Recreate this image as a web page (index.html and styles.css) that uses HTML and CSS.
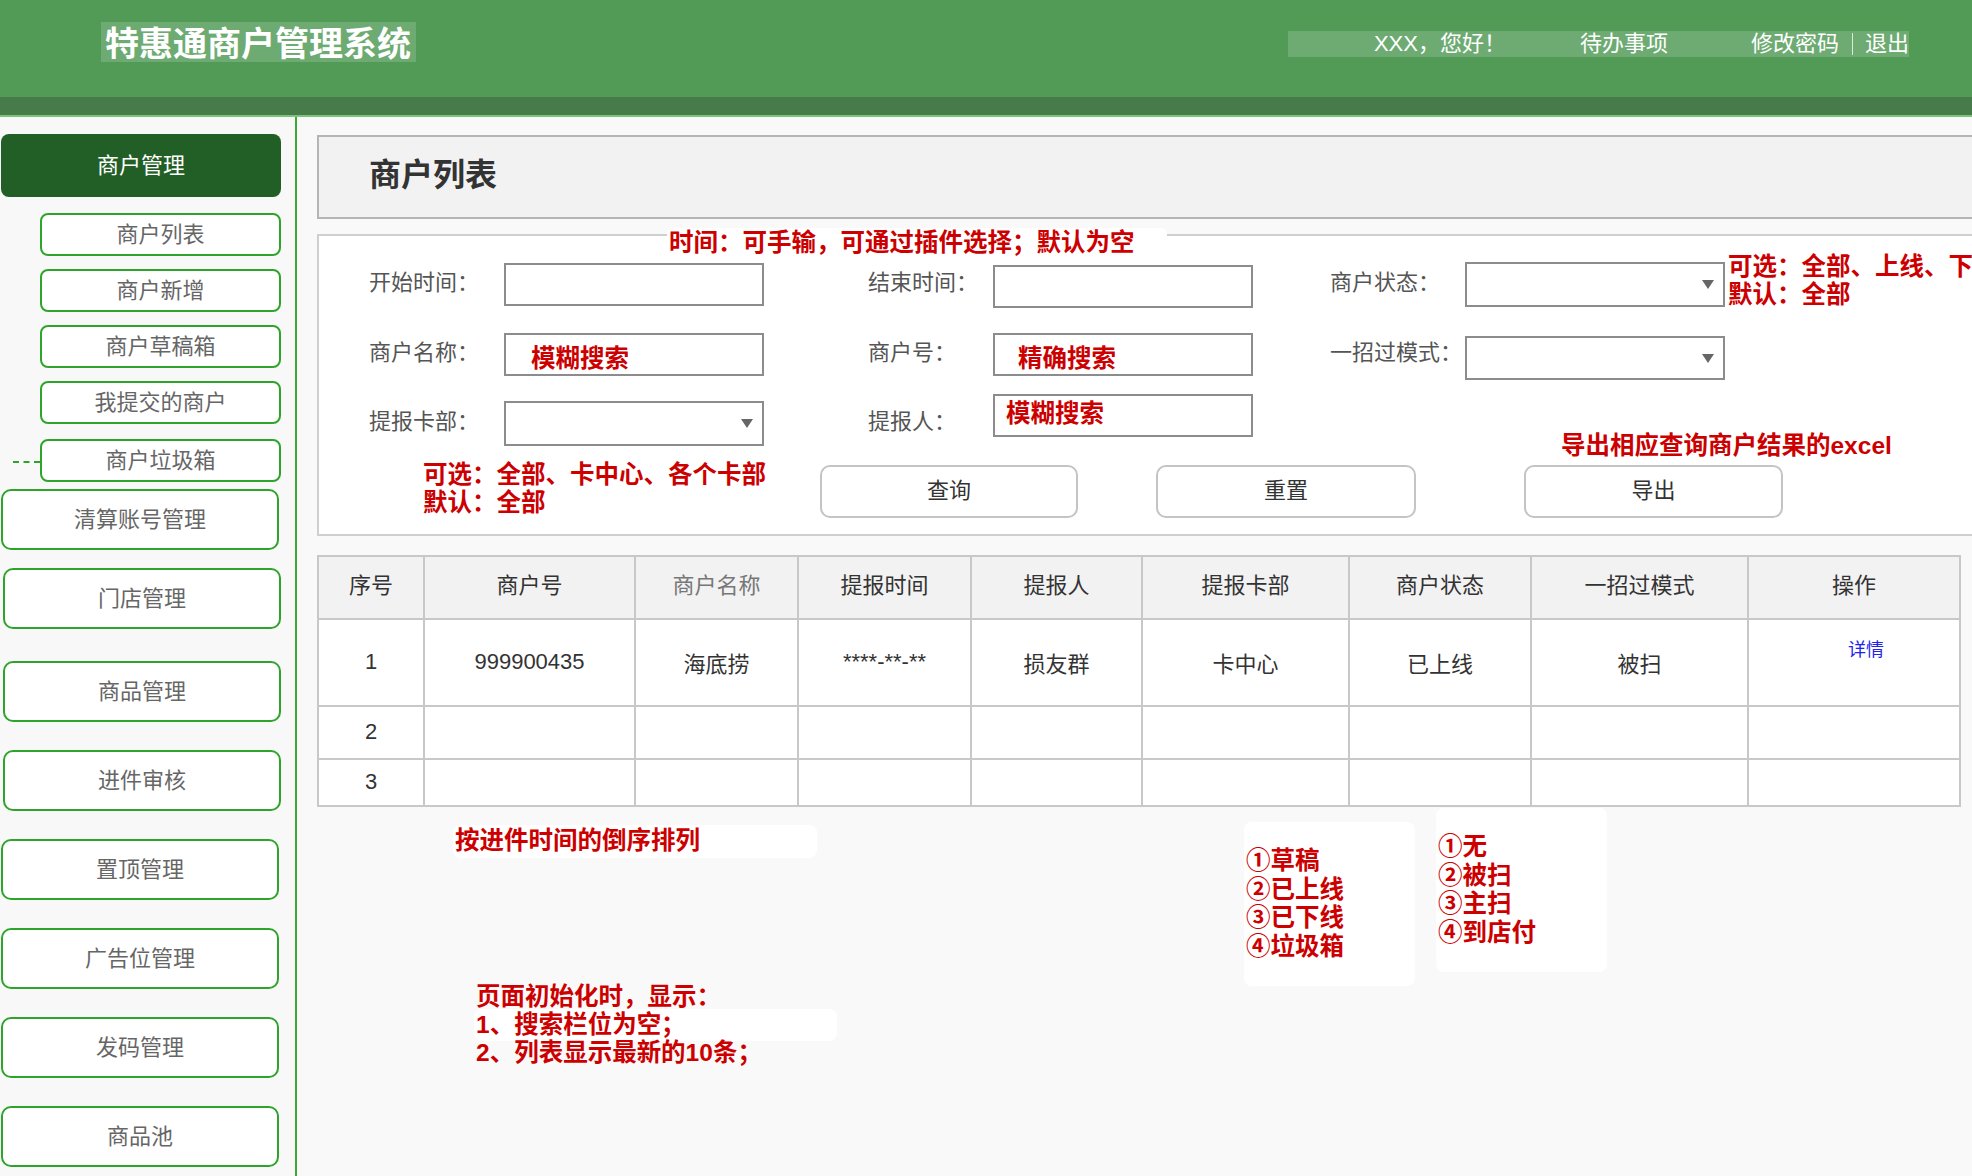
FILE: index.html
```html
<!DOCTYPE html>
<html lang="zh-CN">
<head>
<meta charset="utf-8">
<title>特惠通商户管理系统</title>
<link rel="stylesheet" href="styles.css">
</head>
<body>
<header class="topbar">
  <div class="brand">特惠通商户管理系统</div>
  <div class="userbar">
    <span class="greet">XXX，您好！</span>
    <span class="todo">待办事项</span>
    <span class="pwd">修改密码</span>
    <span class="sep"></span>
    <span class="logout">退出</span>
  </div>
</header>
<div class="band"></div>
<div class="band-line"></div>
<div class="layout">
  <nav class="sidebar">
    <div class="nav-head">商户管理</div>
    <div class="nav-sub first">商户列表</div>
    <div class="nav-sub">商户新增</div>
    <div class="nav-sub">商户草稿箱</div>
    <div class="nav-sub">我提交的商户</div>
    <div class="nav-sub trash">商户垃圾箱</div>
    <div class="nav-main m-first">清算账号管理</div>
    <div class="nav-main m-second shift">门店管理</div>
    <div class="nav-main m-third shift">商品管理</div>
    <div class="nav-main shift">进件审核</div>
    <div class="nav-main">置顶管理</div>
    <div class="nav-main">广告位管理</div>
    <div class="nav-main">发码管理</div>
    <div class="nav-main">商品池</div>
  </nav>
  <main class="main">
    <div class="page-title">商户列表</div>
    <section class="filter">
      <div class="ann ann-time">时间：可手输，可通过插件选择；默认为空</div>
      <div class="ann ann-status">可选：全部、上线、下<br>默认：全部</div>
      <div class="ann ann-excel">导出相应查询商户结果的excel</div>
      <div class="row">
        <div class="field f1"><span class="label">开始时间：</span><div class="box"></div></div>
        <div class="field f2"><span class="label">结束时间：</span><div class="box low2"></div></div>
        <div class="field f3"><span class="label">商户状态：</span><div class="box select tall"></div></div>
      </div>
      <div class="row r2">
        <div class="field f1"><span class="label">商户名称：</span><div class="box"><span class="hint h-name">模糊搜索</span></div></div>
        <div class="field f2"><span class="label">商户号：</span><div class="box"><span class="hint h-no">精确搜索</span></div></div>
        <div class="field f3"><span class="label">一招过模式：</span><div class="box select low8"></div></div>
      </div>
      <div class="row r3">
        <div class="field f1"><span class="label">提报卡部：</span><div class="box select tall"></div></div>
        <div class="field f2"><span class="label">提报人：</span><div class="box up8"><span class="hint h-person">模糊搜索</span></div></div>
      </div>
      <div class="actions">
        <div class="ann ann-inline">可选：全部、卡中心、各个卡部<br>默认：全部</div>
        <div class="btn b-query">查询</div>
        <div class="btn b-reset">重置</div>
        <div class="btn b-export">导出</div>
      </div>
    </section>
    <table class="grid">
      <colgroup>
        <col class="c1"><col class="c2"><col class="c3"><col class="c4"><col class="c5"><col class="c6"><col class="c7"><col class="c8"><col class="c9">
      </colgroup>
      <thead>
        <tr>
          <th>序号</th><th>商户号</th><th class="muted">商户名称</th><th>提报时间</th><th>提报人</th><th>提报卡部</th><th>商户状态</th><th>一招过模式</th><th>操作</th>
        </tr>
      </thead>
      <tbody>
        <tr class="tr1">
          <td>1</td><td>999900435</td><td>海底捞</td><td class="stars">****-**-**</td><td>损友群</td><td>卡中心</td><td>已上线</td><td>被扫</td><td class="op"><a class="detail">详情</a></td>
        </tr>
        <tr class="tr2"><td>2</td><td></td><td></td><td></td><td></td><td></td><td></td><td></td><td></td></tr>
        <tr class="tr3"><td>3</td><td></td><td></td><td></td><td></td><td></td><td></td><td></td><td></td></tr>
      </tbody>
    </table>
    <div class="ann note note-sort">按进件时间的倒序排列</div>
    <div class="note-bg"></div>
    <div class="ann note note-init">页面初始化时，显示：<br>1、搜索栏位为空；<br>2、列表显示最新的10条；</div>
    <div class="ann note note-card note-status">①草稿<br>②已上线<br>③已下线<br>④垃圾箱</div>
    <div class="ann note note-card note-mode">①无<br>②被扫<br>③主扫<br>④到店付</div>
  </main>
</div>
</body>
</html>
```
FILE: styles.css
```css
html, body {
  margin: 0;
  padding: 0;
}
body {
  width: 1972px;
  height: 1176px;
  overflow: hidden;
  background: #f9f9f9;
  font-family: "Liberation Sans", "Noto Sans CJK SC", sans-serif;
  color: #333;
}

/* header */
.topbar {
  height: 97px;
  background: #529b57;
  display: flex;
  align-items: flex-start;
  padding-left: 101px;
  box-sizing: border-box;
}
.brand {
  margin-top: 22px;
  height: 40px;
  line-height: 40px;
  font-size: 34px;
  font-weight: 700;
  color: #fff;
  background: rgba(255, 255, 255, 0.16);
  padding: 0 5px 0 4px;
  font-family: "Noto Sans CJK SC", sans-serif;
}
.userbar {
  margin-left: auto;
  margin-right: 63px;
  margin-top: 31px;
  height: 26px;
  line-height: 26px;
  background: rgba(255, 255, 255, 0.16);
  color: #fff;
  font-size: 22px;
  display: flex;
  align-items: flex-start;
  padding-left: 86px;
}
.todo { margin-left: 74px; }
.pwd { margin-left: 83px; }
.sep {
  width: 1px;
  height: 22px;
  background: rgba(255, 255, 255, 0.75);
  margin: 2px 12px 0 13px;
}
.band {
  height: 18px;
  background: #477b4a;
}
.band-line {
  height: 2px;
  background: #7cc47c;
}

/* layout */
.layout {
  display: flex;
  height: 1059px;
}
.sidebar {
  width: 295px;
  flex: none;
  border-right: 2px solid #3aaa35;
  background: #f8f8f8;
  padding-top: 17px;
  display: flex;
  flex-direction: column;
  align-items: flex-start;
}
.nav-head {
  margin-left: 1px;
  width: 280px;
  height: 63px;
  box-sizing: border-box;
  padding-bottom: 5px;
  background: #225f26;
  border-radius: 8px;
  color: #fff;
  font-size: 22px;
  display: flex;
  align-items: center;
  justify-content: center;
}
.nav-sub {
  position: relative;
  margin-left: 40px;
  margin-top: 13px;
  width: 241px;
  height: 43px;
  box-sizing: border-box;
  padding-bottom: 5px;
  border: 2px solid #2ea52a;
  border-radius: 8px;
  background: #fff;
  color: #666;
  font-size: 22px;
  display: flex;
  align-items: center;
  justify-content: center;
}
.nav-sub.first { margin-top: 16px; }
.nav-sub.trash { margin-top: 15px; }
.nav-sub.trash::before {
  content: "";
  position: absolute;
  left: -29px;
  top: 50%;
  width: 27px;
  border-top: 2px dashed #2ea52a;
}
.nav-main {
  margin-left: 1px;
  margin-top: 28px;
  width: 278px;
  height: 61px;
  box-sizing: border-box;
  padding-bottom: 5px;
  border: 2px solid #2ea52a;
  border-radius: 10px;
  background: #fff;
  color: #666;
  font-size: 22px;
  display: flex;
  align-items: center;
  justify-content: center;
}
.nav-main.shift { margin-left: 3px; }
.nav-main.m-first { margin-top: 7px; }
.nav-main.m-second { margin-top: 18px; }
.nav-main.m-third { margin-top: 32px; }

/* main */
.main {
  flex: 1;
  position: relative;
  padding: 18px 0 0 20px;
  overflow: hidden;
}
.page-title {
  height: 84px;
  box-sizing: border-box;
  border: 2px solid #b5b5b5;
  border-right: none;
  background: #f2f2f2;
  display: flex;
  align-items: center;
  padding: 0 0 10px 50px;
  font-size: 32px;
  font-weight: 700;
  color: #333;
  font-family: "Noto Sans CJK SC", sans-serif;
}

/* filter */
.filter {
  position: relative;
  margin-top: 15px;
  height: 302px;
  box-sizing: border-box;
  border: 2px solid #cfcfcf;
  border-right: none;
  background: #fff;
  padding: 26px 0 0 50px;
}
.row {
  display: flex;
  align-items: center;
  height: 44px;
}
.row.r2 { margin-top: 26px; }
.row.r3 { margin-top: 25px; }
.field {
  display: flex;
  align-items: center;
}
.label {
  font-size: 22px;
  color: #555;
  white-space: nowrap;
  padding-bottom: 8px;
}
.f1 .label, .f3 .label { width: 135px; }
.f2 .label { width: 125px; }
.f2 { margin-left: 104px; }
.f3 { margin-left: 77px; }
.box {
  position: relative;
  width: 260px;
  height: 43px;
  box-sizing: border-box;
  border: 2px solid #8c8c8c;
  background: #fff;
}
.box.tall { height: 45px; }
.box.low2 { margin-top: 4px; }
.box.low8 { margin-top: 8px; height: 44px; }
.box.up8 { margin-bottom: 16px; }
.select::after {
  content: "";
  position: absolute;
  right: 9px;
  top: 50%;
  margin-top: -4px;
  border-left: 6px solid transparent;
  border-right: 6px solid transparent;
  border-top: 9px solid #666;
}
.hint {
  display: block;
  color: #cc0000;
  font-weight: 700;
  font-size: 24.5px;
  line-height: 25px;
  font-family: "Noto Sans CJK SC", sans-serif;
}
.h-name { padding: 9px 0 0 25px; }
.h-no { padding: 9px 0 0 23px; }
.h-person { padding: 3px 0 0 11px; }

.actions {
  display: flex;
  align-items: flex-start;
  margin-top: 20px;
}
.btn {
  height: 53px;
  box-sizing: border-box;
  padding-bottom: 8px;
  border: 2px solid #c4c4c4;
  border-radius: 10px;
  background: #fff;
  font-size: 22px;
  color: #333;
  display: flex;
  align-items: center;
  justify-content: center;
}
.b-query { width: 258px; }
.b-reset { width: 260px; margin-left: 78px; }
.b-export { width: 259px; margin-left: 108px; }

/* annotations */
.ann {
  color: #cc0000;
  font-weight: 700;
  font-size: 24.5px;
  line-height: 28px;
  white-space: nowrap;
}
.ann-inline {
  width: 397px;
  margin-left: 54px;
  margin-top: -4px;
  flex: none;
}
.ann-time {
  position: absolute;
  left: 348px;
  top: -8px;
  background: #fff;
  border-radius: 6px;
  padding: 1px 32px 5px 2px;
  z-index: 2;
}
.ann-status {
  position: absolute;
  left: 1409px;
  top: 17px;
}
.ann-excel {
  position: absolute;
  left: 1242px;
  top: 196px;
}

/* table */
.grid {
  margin-top: 19px;
  width: 1642px;
  table-layout: fixed;
  border-collapse: collapse;
  background: #fff;
}
.c1 { width: 106px; }
.c2 { width: 211px; }
.c3 { width: 163px; }
.c4 { width: 173px; }
.c5 { width: 171px; }
.c6 { width: 207px; }
.c7 { width: 182px; }
.c8 { width: 217px; }
.c9 { width: 212px; }
.grid th, .grid td {
  border: 2px solid #c8c8c8;
  text-align: center;
  font-size: 22px;
  font-weight: 400;
  color: #333;
  padding: 0 0 2px 0;
}
.grid thead tr { height: 63px; }
.grid th {
  background: #f2f2f2;
  padding-bottom: 10px;
}
.grid th.muted { color: #777; }
.tr1 { height: 87px; }
.tr2 { height: 53px; }
.tr3 { height: 47px; }
.stars { font-size: 20px; }
.grid td.op {
  vertical-align: top;
  padding: 15px 0 0 24px;
}
.detail {
  color: #2323ee;
  font-size: 18px;
  cursor: pointer;
}

/* notes on the canvas */
.note {
  position: absolute;
}
.note-sort {
  left: 156px;
  top: 708px;
  width: 362px;
  height: 33px;
  line-height: 31px;
  background: #fff;
  border-radius: 8px;
  padding-left: 2px;
}
.note-bg {
  position: absolute;
  left: 177px;
  top: 892px;
  width: 363px;
  height: 32px;
  background: #fff;
  border-radius: 8px;
}
.note-init {
  left: 179px;
  top: 866px;
}
.note-card {
  width: 169px;
  height: 164px;
  background: #fff;
  border-radius: 8px;
  padding-left: 2px;
  display: flex;
  flex-direction: column;
  justify-content: center;
  line-height: 28.5px;
}
.note-status {
  left: 947px;
  top: 705px;
}
.note-mode {
  left: 1139px;
  top: 691px;
}
```
